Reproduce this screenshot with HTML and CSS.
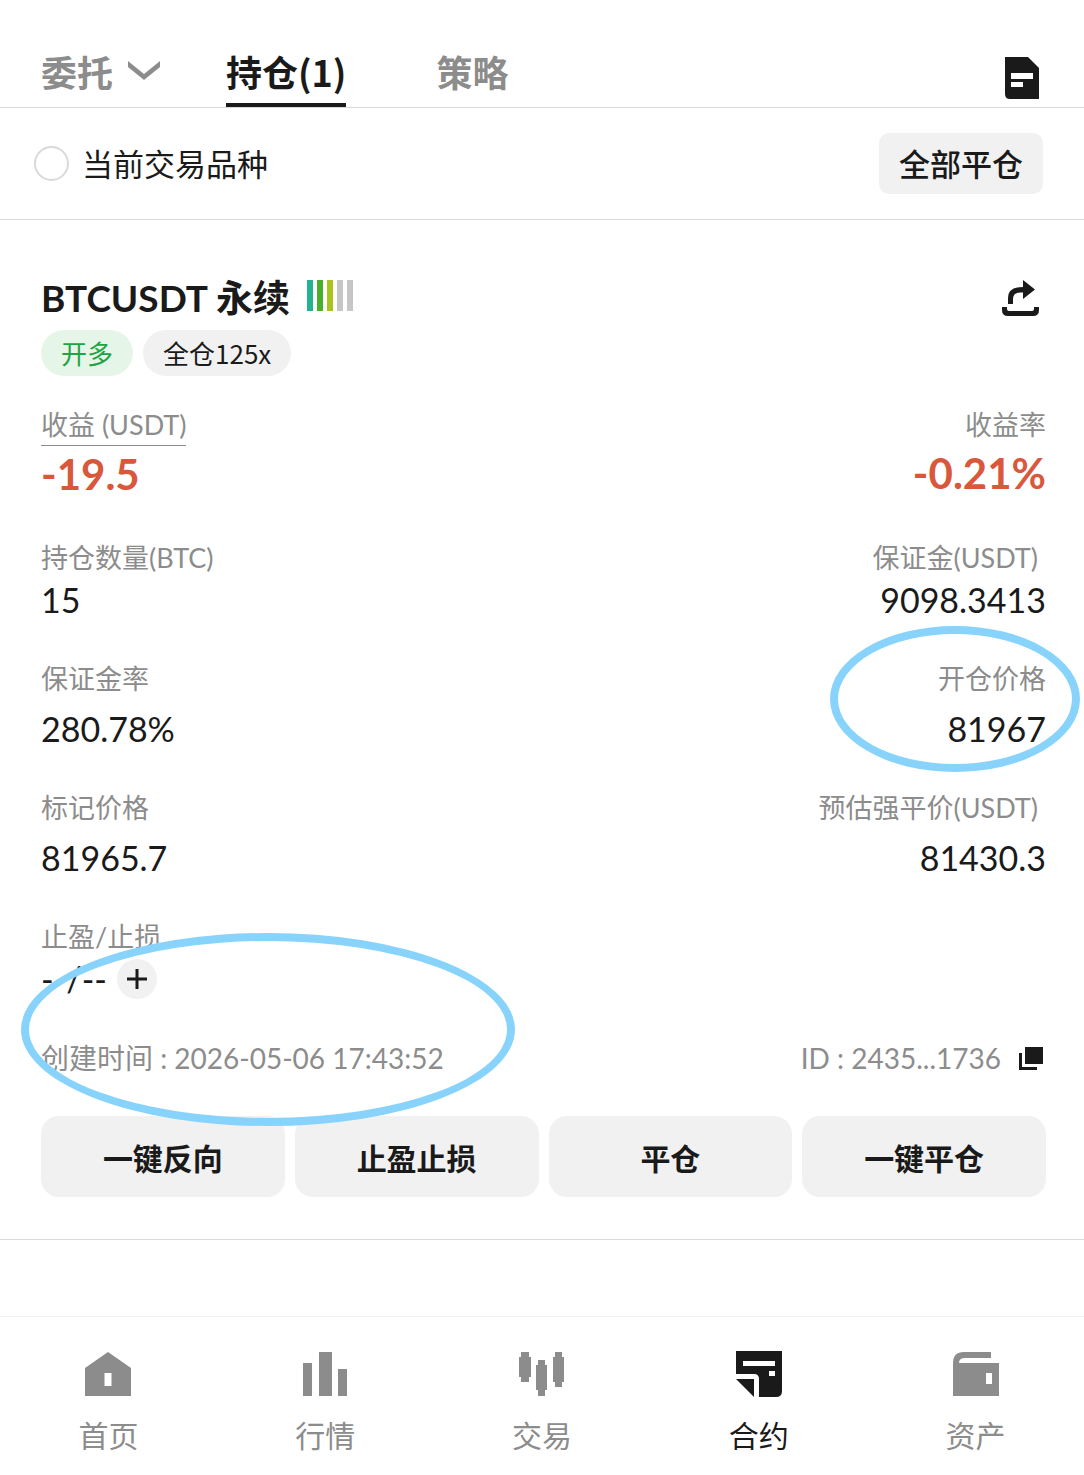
FILE: index.html
```html
<!DOCTYPE html>
<html lang="zh-CN">
<head>
    <meta charset="UTF-8">
    <meta name="viewport" content="width=device-width, initial-scale=1.0">
    <title>合约持仓</title>
    <link rel="stylesheet" href="styles.css">
</head>
<body>
    <header class="tabs">
        <button type="button" class="tab tab-menu">委托
            <svg width="32" height="20" viewBox="0 0 32 20"><path d="M0 0L16 13L32 0V6L16 19L0 6Z" fill="currentColor"/></svg>
        </button>
        <button type="button" class="tab active">持仓(1)</button>
        <button type="button" class="tab tab-last">策略</button>
        <button type="button" class="icon-btn history" aria-label="历史记录">
            <svg width="34" height="42" viewBox="0 0 34 42">
                <path d="M0 0H23L34 11V42H5Q0 42 0 37Z" fill="#1a1a1a"/>
                <path d="M6 16H28V22H6ZM6 25H18V30H6Z" fill="#fff"/>
            </svg>
        </button>
    </header>

    <section class="filter">
        <label class="filter-label" for="current">
            <input type="radio" id="current" name="current">当前交易品种
        </label>
        <button type="button" class="close-all">全部平仓</button>
    </section>

    <main class="position">
        <div class="title-row">
            <h1>BTCUSDT 永续</h1>
            <svg class="level" width="46" height="31" viewBox="0 0 46 31">
                <rect width="6" height="31" fill="#24b38c"/>
                <rect x="10" width="6" height="31" fill="#49b02c"/>
                <rect x="20" width="6" height="31" fill="#a9c41c"/>
                <rect x="30" width="6" height="31" fill="#c6c6c6"/>
                <rect x="40" width="6" height="31" fill="#c6c6c6"/>
            </svg>
            <button type="button" class="icon-btn share" aria-label="分享">
                <svg width="37" height="36" viewBox="0 0 37 36">
                    <path d="M21 0L33 9.500L21 19V12.500Q11 11.500 11 19V24H6V18Q6 7 21 7Z" fill="#1a1a1a"/>
                    <path d="M0 27H5V29Q5 31 7 31H30Q32 31 32 29V27H37V30Q37 36 31 36H6Q0 36 0 30Z" fill="#1a1a1a"/>
                </svg>
            </button>
        </div>
        <div class="tags">
            <span class="tag long">开多</span>
            <span class="tag">全仓125x</span>
        </div>

        <div class="stats">
            <div class="row">
                <div class="stat profit">
                    <span class="name underlined">收益 (USDT)</span>
                    <strong class="value">-19.5</strong>
                </div>
                <div class="stat profit">
                    <span class="name">收益率</span>
                    <strong class="value">-0.21%</strong>
                </div>
            </div>
            <div class="row">
                <div class="stat tight">
                    <span class="name">持仓数量(BTC)</span>
                    <span class="value">15</span>
                </div>
                <div class="stat tight">
                    <span class="name unit">保证金(USDT)</span>
                    <span class="value">9098.3413</span>
                </div>
            </div>
            <div class="row">
                <div class="stat">
                    <span class="name">保证金率</span>
                    <span class="value">280.78%</span>
                </div>
                <div class="stat">
                    <span class="name">开仓价格</span>
                    <span class="value">81967</span>
                    <i class="mark mark-price"></i>
                </div>
            </div>
            <div class="row">
                <div class="stat">
                    <span class="name">标记价格</span>
                    <span class="value">81965.7</span>
                </div>
                <div class="stat">
                    <span class="name unit">预估强平价(USDT)</span>
                    <span class="value">81430.3</span>
                </div>
            </div>
            <div class="row">
                <div class="stat tight">
                    <span class="name">止盈/止损</span>
                    <span class="value stop">--/--
                        <button type="button" class="add" aria-label="添加">
                            <svg width="20" height="20" viewBox="0 0 20 20"><path d="M10 0V20M0 10H20" stroke="#1a1a1a" stroke-width="3"/></svg>
                        </button>
                    </span>
                </div>
            </div>
            <div class="row info">
                <span>创建时间 : 2026-05-06 17:43:52</span>
                <span class="order-id">ID : 2435...1736
                    <button type="button" class="icon-btn" aria-label="复制">
                        <svg width="24" height="23" viewBox="0 0 24 23">
                            <path d="M6 0H24V17H6ZM0 6H3V20H18V23H0Z" fill="#1a1a1a"/>
                        </svg>
                    </button>
                </span>
                <i class="mark mark-time"></i>
            </div>
        </div>

        <div class="actions">
            <button type="button">一键反向</button>
            <button type="button">止盈止损</button>
            <button type="button">平仓</button>
            <button type="button">一键平仓</button>
        </div>
    </main>

    <nav class="bottom-nav">
        <a href="#">
            <svg width="46" height="46" viewBox="0 0 46 46">
                <path d="M23 1L46 17V45H0V17ZM19.500 22V35H26.500V22Z" fill="currentColor" fill-rule="evenodd"/>
            </svg>
            首页
        </a>
        <a href="#">
            <svg width="46" height="46" viewBox="0 0 46 46">
                <path d="M1 12H10V45H1ZM17 1H30V45H17ZM36 18H45V45H36Z" fill="currentColor"/>
            </svg>
            行情
        </a>
        <a href="#">
            <svg width="46" height="46" viewBox="0 0 46 46">
                <path d="M2 1H10V6H12V26H10V31H2V26H0V6H2ZM19 9H26V14H28V39H26V45H19V39H17V14H19ZM36 1H43V6H45V31H43V36H36V31H34V6H36Z" fill="currentColor"/>
            </svg>
            交易
        </a>
        <a href="#" class="active">
            <svg width="46" height="46" viewBox="0 0 46 46">
                <path d="M0 0H46V40Q46 46 40 46H23V28Q23 23 18 23H0Z" fill="currentColor"/>
                <path d="M0 28H18V46Z" fill="currentColor"/>
                <path d="M7 10H39V15H7ZM33 20H39V25H33Z" fill="#fff"/>
            </svg>
            合约
        </a>
        <a href="#">
            <svg width="46" height="46" viewBox="0 0 46 46">
                <path d="M0 12Q0 1 11 1H38V7H12Q6 7 6 12H46V45H0ZM33 22V33H39V22Z" fill="currentColor" fill-rule="evenodd"/>
            </svg>
            资产
        </a>
    </nav>
</body>
</html>
```

FILE: styles.css
```css
* {
    box-sizing: border-box;
}

body {
    margin: 0;
    min-height: 100vh;
    display: flex;
    flex-direction: column;
    background: #fff;
    color: #1a1a1a;
    font-family: Lato, "Noto Sans CJK SC", sans-serif;
}

button {
    border: none;
    padding: 0;
    background: none;
    color: inherit;
    font-family: "Noto Sans CJK SC", sans-serif;
    cursor: pointer;
}

svg {
    display: block;
    flex-shrink: 0;
}

/* Tabs */
.tabs {
    display: flex;
    align-items: stretch;
    padding: 39px 45px 0 41px;
    border-bottom: 1px solid #d9d9d9;
}

.tab {
    height: 68px;
    border-bottom: 4px solid transparent;
    color: #8c8c8c;
    font-size: 36px;
    line-height: 60px;
    font-weight: 700;
}

.tab.active {
    color: #1a1a1a;
    border-color: #1a1a1a;
}

.tab-menu {
    display: flex;
    align-items: center;
    gap: 15px;
    margin-right: 66px;
}

.tab-last {
    margin-left: 90px;
}

.icon-btn {
    display: flex;
}

.history {
    align-items: center;
    margin-left: auto;
    padding-top: 10px;
}

/* Filter */
.filter {
    display: flex;
    justify-content: space-between;
    align-items: center;
    padding: 25px 41px 25px 34px;
    border-bottom: 1px solid #d9d9d9;
}

.filter-label {
    display: flex;
    align-items: center;
    gap: 13px;
    font-size: 31px;
    line-height: 40px;
}

.filter-label input {
    appearance: none;
    width: 35px;
    height: 35px;
    margin: 0;
    border: 2px solid #d9d9d9;
    border-radius: 50%;
}

.filter-label input:checked {
    border: 10px solid #1a1a1a;
}

.close-all {
    height: 61px;
    padding: 0 20px 2px;
    border-radius: 10px;
    background: #f1f1f1;
    font-size: 31px;
    font-weight: 500;
}

/* Position */
.position {
    padding: 54px 38px 42px 41px;
    border-bottom: 1px solid #d9d9d9;
}

.title-row {
    display: flex;
    align-items: center;
    height: 48px;
}

h1 {
    margin: 0;
    font-size: 37px;
    line-height: 48px;
    font-weight: 700;
}

.level {
    margin-left: 17px;
    margin-bottom: 5px;
}

.share {
    margin-left: auto;
    margin-right: 7px;
}

.tags {
    display: flex;
    gap: 10px;
    margin-top: 8px;
}

.tag {
    height: 46px;
    padding: 0 20px;
    border-radius: 23px;
    background: #f1f1f1;
    font-family: "Noto Sans CJK SC", sans-serif;
    font-size: 26px;
    line-height: 46px;
}

.tag.long {
    background: #e5f6e9;
    color: #1fa344;
}

.stats {
    display: flex;
    flex-direction: column;
    gap: 39px;
    margin-top: 29px;
}

.row {
    display: flex;
    justify-content: space-between;
    position: relative;
}

.stat {
    display: flex;
    flex-direction: column;
    align-items: flex-start;
    gap: 10px;
    position: relative;
}

.stat:nth-child(2) {
    align-items: flex-end;
}

.stat.tight {
    gap: 2px;
}

.name {
    color: #8c8c8c;
    font-size: 27px;
    line-height: 40px;
}

.name.underlined {
    border-bottom: 1px solid #8c8c8c;
}

.name.unit {
    padding-right: 8px;
}

.value {
    font-size: 34px;
    line-height: 40px;
}

.stat.profit {
    gap: 6px;
    padding-bottom: 3px;
}

.profit .value {
    color: #d9573b;
    font-size: 42px;
    line-height: 44px;
}

.stop {
    display: flex;
    align-items: center;
    gap: 10px;
}

.add {
    display: flex;
    justify-content: center;
    align-items: center;
    width: 40px;
    height: 40px;
    border-radius: 50%;
    background: #f1f1f1;
}

.info {
    color: #8c8c8c;
    font-size: 28px;
    line-height: 40px;
}

.order-id {
    display: flex;
    align-items: center;
    gap: 18px;
    padding-right: 3px;
}

/* Hand-drawn rings over the figures */
.mark {
    position: absolute;
    border: 8px solid #87d3fb;
    border-radius: 50%;
    pointer-events: none;
}

.mark-price {
    top: -33px;
    right: -34px;
    width: 250px;
    height: 146px;
}

.mark-time {
    top: -105px;
    left: -20px;
    width: 494px;
    height: 193px;
}

.actions {
    display: grid;
    grid-template-columns: repeat(4, 1fr);
    gap: 10px;
    margin-top: 38px;
}

.actions button {
    height: 81px;
    border-radius: 18px;
    background: #f1f1f1;
    font-size: 30px;
    font-weight: 700;
}

/* Bottom navigation */
.bottom-nav {
    display: flex;
    margin-top: auto;
    padding: 34px 0 18px;
    border-top: 1px solid #f0f0f0;
}

.bottom-nav a {
    flex: 1;
    display: flex;
    flex-direction: column;
    align-items: center;
    gap: 16px;
    color: #8c8c8c;
    font-size: 30px;
    line-height: 44px;
    text-decoration: none;
}

.bottom-nav a.active {
    color: #1a1a1a;
}
```
